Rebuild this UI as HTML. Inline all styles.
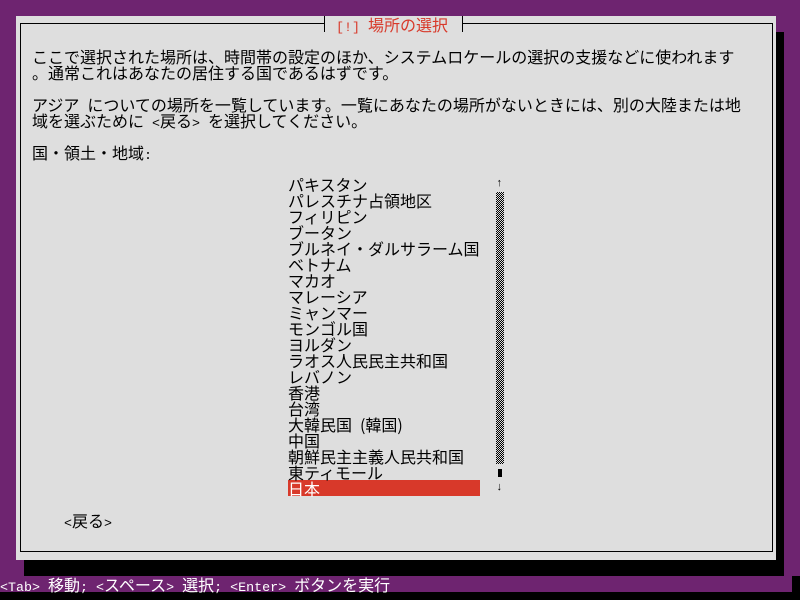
<!DOCTYPE html>
<html><head><meta charset="utf-8"><style>
html,body{margin:0;padding:0}
body{width:800px;height:600px;position:relative;overflow:hidden;background:#6e2470;font-family:"Noto Sans CJK JP","Liberation Mono",monospace;font-size:16px;line-height:16px;color:#000}
.a{font-family:"Liberation Mono",monospace;font-size:13.33px}
.t{position:absolute;white-space:pre;height:16px;line-height:16px}
#dlg{position:absolute;left:16px;top:16px;width:760px;height:544px;background:#dedede}
#shr{position:absolute;left:776px;top:32px;width:8px;height:544px;background:#000}
#shb{position:absolute;left:24px;top:560px;width:760px;height:16px;background:#000}
#brd{position:absolute;left:20px;top:23px;width:751px;height:527px;border:1.5px solid #000}
#ttl{position:absolute;left:324px;top:16px;width:137px;height:16px;background:#dedede;border-left:1.5px solid #000;border-right:1.5px solid #000}
#stat{position:absolute;left:0;top:576px;width:792px;height:16px;background:#6e2470}
#blk1{position:absolute;left:792px;top:576px;width:8px;height:24px;background:#000}
#blk2{position:absolute;left:0;top:592px;width:800px;height:8px;background:#000}
#hl{position:absolute;left:288px;top:480px;width:192px;height:16px;background:#d8392a}
#trk{position:absolute;left:496px;top:192px;width:8px;height:272px;background:repeating-conic-gradient(#000 0 25%,#dedede 0 50%) 0 0/2px 2px}
#thm{position:absolute;left:498px;top:469px;width:4px;height:8px;background:#000}
</style></head><body>
<div id="dlg"></div><div id="shr"></div><div id="shb"></div>
<div id="brd"></div>
<div id="ttl"></div>
<div class="t" style="left:336px;top:16px;color:#d8392a"><span class="a">[!] </span>場所の選択</div>
<div class="t" style="left:32px;top:48px">ここで選択された場所は、時間帯の設定のほか、システムロケールの選択の支援などに使われます</div>
<div class="t" style="left:32px;top:64px">。通常これはあなたの居住する国であるはずです。</div>
<div class="t" style="left:32px;top:96px">アジア<span class="a"> </span>についての場所を一覧しています。一覧にあなたの場所がないときには、別の大陸または地</div>
<div class="t" style="left:32px;top:112px">域を選ぶために<span class="a"> &lt;</span>戻る<span class="a">&gt; </span>を選択してください。</div>
<div class="t" style="left:32px;top:144px">国・領土・地域<span class="a">:</span></div>
<div id="hl"></div>
<div class="t" style="left:288px;top:176px">パキスタン</div>
<div class="t" style="left:288px;top:192px">パレスチナ占領地区</div>
<div class="t" style="left:288px;top:208px">フィリピン</div>
<div class="t" style="left:288px;top:224px">ブータン</div>
<div class="t" style="left:288px;top:240px">ブルネイ・ダルサラーム国</div>
<div class="t" style="left:288px;top:256px">ベトナム</div>
<div class="t" style="left:288px;top:272px">マカオ</div>
<div class="t" style="left:288px;top:288px">マレーシア</div>
<div class="t" style="left:288px;top:304px">ミャンマー</div>
<div class="t" style="left:288px;top:320px">モンゴル国</div>
<div class="t" style="left:288px;top:336px">ヨルダン</div>
<div class="t" style="left:288px;top:352px">ラオス人民民主共和国</div>
<div class="t" style="left:288px;top:368px">レバノン</div>
<div class="t" style="left:288px;top:384px">香港</div>
<div class="t" style="left:288px;top:400px">台湾</div>
<div class="t" style="left:288px;top:416px">大韓民国<span class="a"> </span>(韓国)</div>
<div class="t" style="left:288px;top:432px">中国</div>
<div class="t" style="left:288px;top:448px">朝鮮民主主義人民共和国</div>
<div class="t" style="left:288px;top:464px">東ティモール</div>
<div class="t" style="left:288px;top:480px;color:#fff">日本</div>
<div class="t a" style="left:496px;top:176px;font-size:11px">↑</div>
<div id="trk"></div><div id="thm"></div>
<div class="t a" style="left:496px;top:480px;font-size:11px">↓</div>
<div class="t" style="left:64px;top:512px"><span class="a">&lt;</span>戻る<span class="a">&gt;</span></div>
<div id="stat"></div><div id="blk1"></div><div id="blk2"></div>
<div class="t" style="left:0;top:576px;color:#fff"><span class="a">&lt;Tab&gt; </span>移動<span class="a">; &lt;</span>スペース<span class="a">&gt; </span>選択<span class="a">; &lt;Enter&gt; </span>ボタンを実行</div>
</body></html>
